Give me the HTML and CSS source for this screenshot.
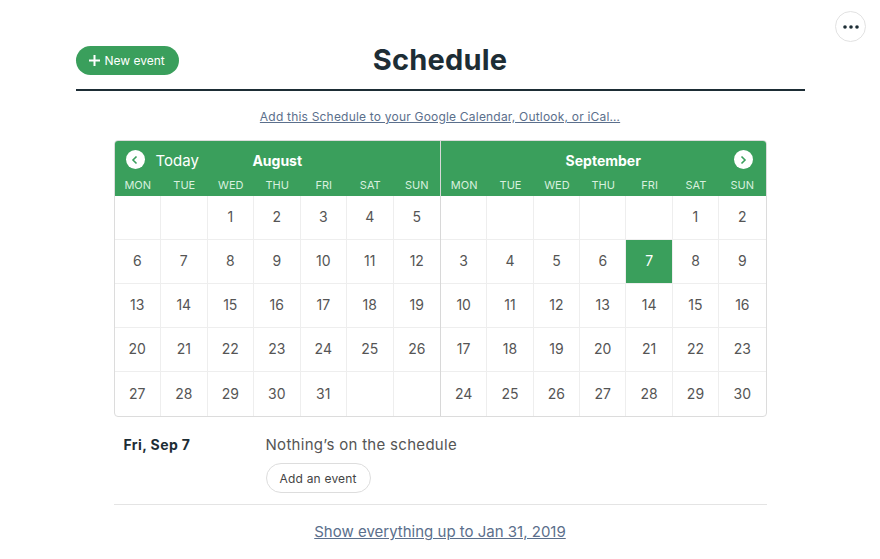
FILE: index.html
```html
<!DOCTYPE html>
<html lang="en">

<head>
    <meta charset="UTF-8">
    <meta name="viewport" content="width=device-width, initial-scale=1.0">
    <title>Schedule</title>
    <link rel="stylesheet" href="styles.css">
</head>

<body>
    <button type="button" class="options" aria-label="Options">
        <svg width="16" height="4" viewBox="0 0 16 4"><circle cx="2" cy="2" r="1.8" /><circle cx="8" cy="2" r="1.8" /><circle cx="14" cy="2" r="1.8" /></svg>
    </button>

    <header class="top">
        <button type="button" class="new-event">
            <svg width="13" height="13" viewBox="0 0 13 13"><path d="M6.5 1v11M1 6.5h11" /></svg>
            New event
        </button>
        <h1 class="heading">Schedule</h1>
    </header>

    <p class="subscribe"><a href="#">Add this Schedule to your Google Calendar, Outlook, or iCal…</a></p>

    <div class="calendar">
        <div class="month">
            <div class="month-head">
                <div class="title-row">
                    <span class="nav"><svg width="10" height="10" viewBox="0 0 10 10"><path d="M6.5 1.5 3 5l3.5 3.5" /></svg></span>
                    <span class="today">Today</span>
                    <span class="month-name">August</span>
                </div>
                <div class="weekdays">
                    <span>MON</span><span>TUE</span><span>WED</span><span>THU</span><span>FRI</span><span>SAT</span><span>SUN</span>
                </div>
            </div>
            <div class="days">
                <span></span><span></span><span>1</span><span>2</span><span>3</span><span>4</span><span>5</span>
                <span>6</span><span>7</span><span>8</span><span>9</span><span>10</span><span>11</span><span>12</span>
                <span>13</span><span>14</span><span>15</span><span>16</span><span>17</span><span>18</span><span>19</span>
                <span>20</span><span>21</span><span>22</span><span>23</span><span>24</span><span>25</span><span>26</span>
                <span>27</span><span>28</span><span>29</span><span>30</span><span>31</span><span></span><span></span>
            </div>
        </div>
        <div class="month">
            <div class="month-head">
                <div class="title-row">
                    <span class="month-name">September</span>
                    <span class="nav next"><svg width="10" height="10" viewBox="0 0 10 10"><path d="M3.5 1.5 7 5 3.5 8.5" /></svg></span>
                </div>
                <div class="weekdays">
                    <span>MON</span><span>TUE</span><span>WED</span><span>THU</span><span>FRI</span><span>SAT</span><span>SUN</span>
                </div>
            </div>
            <div class="days">
                <span></span><span></span><span></span><span></span><span></span><span>1</span><span>2</span>
                <span>3</span><span>4</span><span>5</span><span>6</span><span class="selected">7</span><span>8</span><span>9</span>
                <span>10</span><span>11</span><span>12</span><span>13</span><span>14</span><span>15</span><span>16</span>
                <span>17</span><span>18</span><span>19</span><span>20</span><span>21</span><span>22</span><span>23</span>
                <span>24</span><span>25</span><span>26</span><span>27</span><span>28</span><span>29</span><span>30</span>
            </div>
        </div>
    </div>

    <div class="agenda">
        <div class="agenda-date">Fri, Sep 7</div>
        <div class="agenda-body">
            <p class="empty">Nothing’s on the schedule</p>
            <button type="button" class="add-event">Add an event</button>
        </div>
    </div>

    <p class="more"><a href="#">Show everything up to Jan 31, 2019</a></p>
</body>

</html>
```

FILE: styles.css
```css
body {
    font-family: Inter, "Noto Sans", sans-serif;
    margin: 0;
    padding: 0;
    background-color: #fff;
    color: #1d2d35;
}

a {
    color: #5b6f8c;
}

.options {
    position: absolute;
    top: 11px;
    right: 14px;
    width: 31px;
    height: 31px;
    border-radius: 50%;
    border: 1px solid #e2e2e2;
    background: #fff;
    display: flex;
    align-items: center;
    justify-content: center;
    padding: 0;
}

.options svg {
    fill: #1d2d35;
}

.top {
    position: relative;
    width: 729px;
    margin: 0 auto;
    padding-top: 40px;
    padding-bottom: 9px;
    border-bottom: 2px solid #1d2d35;
    display: flex;
    justify-content: center;
}

.heading {
    margin: 0;
    font-size: 29px;
    line-height: 40px;
    font-weight: 700;
    letter-spacing: 0.2px;
}

.new-event {
    position: absolute;
    left: 0;
    top: 46px;
    height: 29px;
    padding: 0 14px 0 12px;
    border: none;
    border-radius: 15px;
    background-color: #3a9f5c;
    color: #fff;
    font-family: inherit;
    font-size: 12px;
    display: flex;
    align-items: center;
    gap: 4px;
}

.new-event svg {
    stroke: #fff;
    stroke-width: 2;
    fill: none;
}

.subscribe {
    margin: 17px 0 0;
    text-align: center;
    font-size: 12px;
    line-height: 18px;
    letter-spacing: 0.2px;
}

.calendar {
    width: 651px;
    margin: 14px auto 0;
    border: 1px solid #dcdcdc;
    border-radius: 4px;
    overflow: hidden;
    display: grid;
    grid-template-columns: 1fr 1fr;
}

.month + .month {
    border-left: 1px solid #d8d8d8;
}

.month-head {
    background-color: #3a9f5c;
    color: #fff;
    height: 55px;
}

.title-row {
    height: 31px;
    display: flex;
    align-items: center;
    justify-content: center;
    position: relative;
    padding-top: 8px;
    box-sizing: border-box;
}

.month-name {
    font-size: 14px;
    font-weight: 700;
}

.nav {
    position: absolute;
    top: 9px;
    left: 11px;
    width: 19px;
    height: 19px;
    border-radius: 50%;
    background: #fff;
    display: flex;
    align-items: center;
    justify-content: center;
}

.nav.next {
    left: auto;
    right: 13px;
}

.nav svg {
    stroke: #3a9f5c;
    stroke-width: 1.6;
    fill: none;
}

.today {
    position: absolute;
    left: 41px;
    top: 10px;
    font-size: 15px;
    line-height: 20px;
}

.weekdays {
    display: grid;
    grid-template-columns: repeat(7, 1fr);
    font-size: 11px;
    line-height: 22px;
    padding-top: 2px;
    text-align: center;
    color: #d8f0df;
}

.days {
    display: grid;
    grid-template-columns: repeat(7, 1fr);
    grid-auto-rows: 44px;
}

.days span {
    display: flex;
    align-items: center;
    justify-content: center;
    font-size: 14px;
    color: #555;
    border-right: 1px solid #eee;
    border-bottom: 1px solid #eee;
    padding-bottom: 2px;
}

.days span:nth-child(7n) {
    border-right: none;
}

.days span:nth-last-child(-n+7) {
    border-bottom: none;
}

.days .selected {
    background-color: #3a9f5c;
    color: #fff;
}

.agenda {
    width: 653px;
    margin: 0 auto;
    display: flex;
    padding-top: 18px;
    padding-bottom: 11px;
    border-bottom: 1px solid #e4e4e4;
}

.agenda-date {
    width: 142px;
    padding-left: 10px;
    font-size: 14px;
    font-weight: 700;
    line-height: 20px;
    letter-spacing: 0.4px;
}

.empty {
    margin: 0;
    font-size: 15px;
    line-height: 20px;
    color: #555;
    letter-spacing: 0.3px;
}

.add-event {
    margin-top: 8px;
    height: 30px;
    padding: 0 13px;
    border: 1px solid #ddd;
    border-radius: 15px;
    background: #fff;
    color: #444;
    font-family: inherit;
    font-size: 12px;
    letter-spacing: 0.2px;
}

.more {
    margin: 17px 0 0;
    text-align: center;
    font-size: 15px;
    line-height: 20px;
}
```
